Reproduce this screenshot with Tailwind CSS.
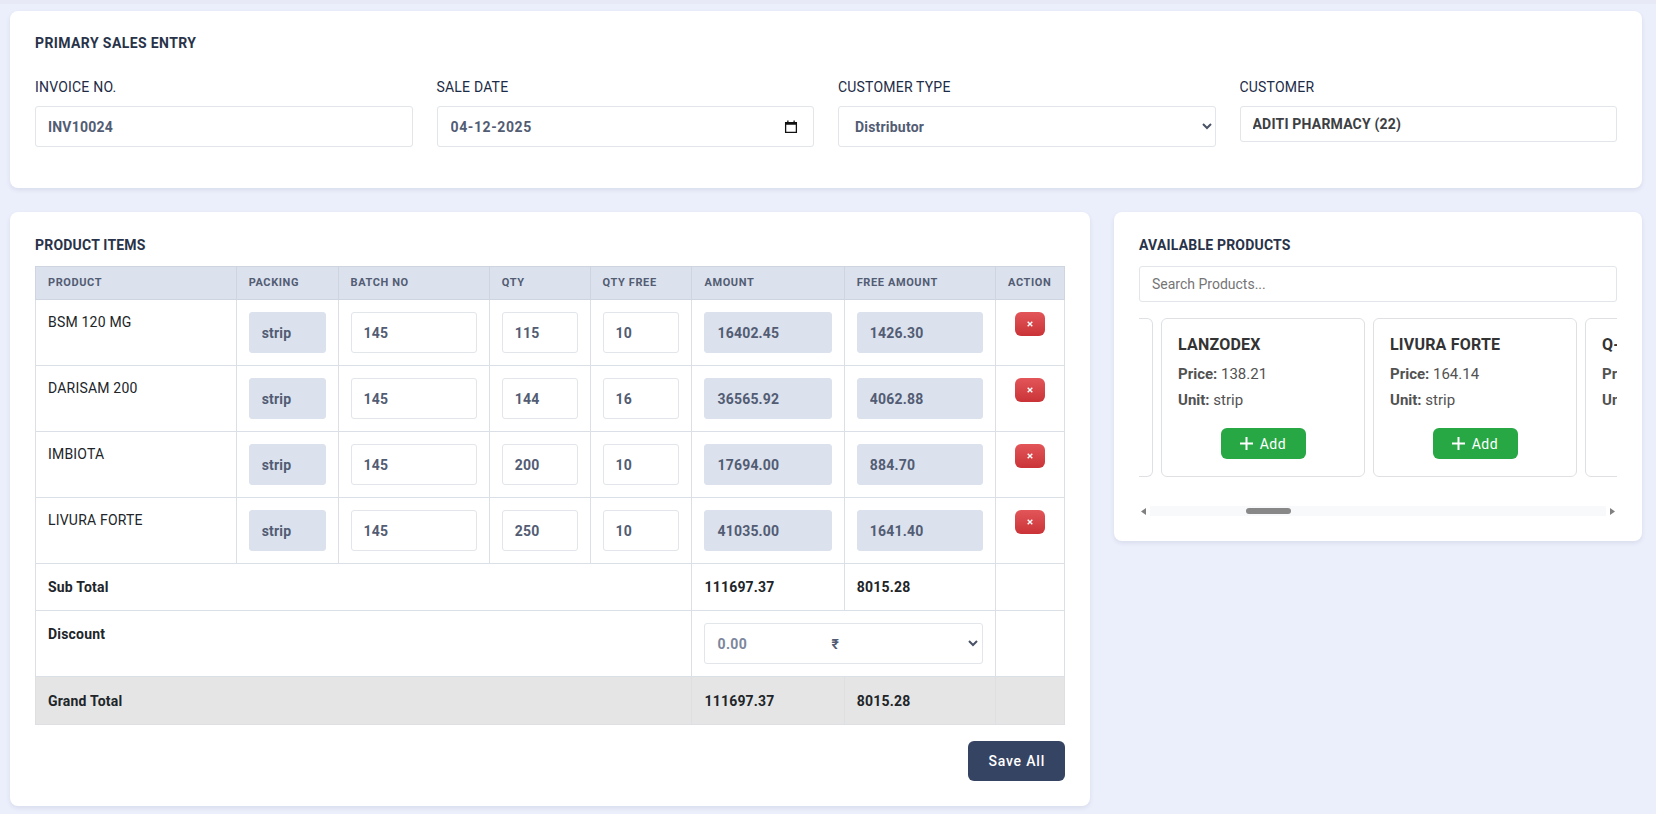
<!DOCTYPE html>
<html lang="en">
  <head>
    <meta charset="UTF-8" />
    <meta name="viewport" content="width=device-width, initial-scale=1.0" />
    <title>Primary Sales Entry</title>
    <script src="https://cdn.jsdelivr.net/npm/@tailwindcss/browser@4"></script>
  </head>
  <body class="min-h-screen bg-[#ebeefb] font-[Roboto,sans-serif] text-sm text-[#212529]">
    <div class="h-1 bg-[#e7eaf6]"></div>
    <main class="pt-[7px] pr-[14px] pb-2 pl-[10px]">
      <!-- Invoice details -->
      <section class="rounded-lg bg-white px-[25px] pt-6 pb-[41px] shadow-[0_2px_4px_rgba(60,75,110,0.1)]">
        <h2 class="mb-[26px] text-sm/4 font-bold tracking-[0.4px] text-[#283349]">PRIMARY SALES ENTRY</h2>
        <div class="grid grid-cols-1 items-start gap-6 md:grid-cols-2 lg:grid-cols-4">
          <div>
            <label for="invoiceNo" class="mb-[9px] block text-sm/5 tracking-[0.2px] text-[#1c2b46]">INVOICE NO.</label>
            <input id="invoiceNo" type="text" value="INV10024" class="h-[41px] w-full rounded-[3px] border border-[#e2e5e9] px-3 font-bold tracking-[0.2px] text-[#525c73]" />
          </div>
          <div>
            <label for="saleDate" class="mb-[9px] block text-sm/5 tracking-[0.2px] text-[#1c2b46]">SALE DATE</label>
            <div class="flex h-[41px] items-center rounded-[3px] border border-[#e2e5e9] pr-[15px] pl-[13px]">
              <input id="saleDate" type="text" value="04-12-2025" class="min-w-0 flex-1 font-bold tracking-[0.6px] text-[#525c73]" />
              <button type="button" aria-label="Open calendar">
                <svg class="size-[14px]" viewBox="0 0 13 13" fill="none">
                  <path d="M1.5 2.5h10v9h-10z" stroke="#111" stroke-width="1.2" />
                  <path d="M1 2h11v2.5H1zM3 0.5h1.2v2H3zM8.8 0.5h1.2v2H8.8z" fill="#111" />
                </svg>
              </button>
            </div>
          </div>
          <div>
            <label for="customerType" class="mb-[9px] block text-sm/5 tracking-[0.2px] text-[#1c2b46]">CUSTOMER TYPE</label>
            <div class="relative">
              <select id="customerType" class="h-[41px] w-full appearance-none rounded-[3px] border border-[#e2e5e9] px-4 font-bold tracking-[0.2px] text-[#525c73]">
                <option>Distributor</option>
              </select>
              <svg class="pointer-events-none absolute top-[17px] right-1 h-[7px] w-[10px]" viewBox="0 0 10 7" fill="none" stroke="#4a5266" stroke-width="2">
                <path d="M1 1l4 4 4-4" />
              </svg>
            </div>
          </div>
          <div>
            <label for="customer" class="mb-[9px] block text-sm/5 tracking-[0.2px] text-[#1c2b46]">CUSTOMER</label>
            <input id="customer" type="text" value="ADITI PHARMACY (22)" class="h-9 w-full rounded-[3px] border border-[#e2e5e9] px-3 font-bold tracking-[0.2px] text-[#3c4043]" />
          </div>
        </div>
      </section>

      <div class="mt-6 grid grid-cols-1 items-start gap-6 lg:grid-cols-12">
        <!-- Product items -->
        <section class="rounded-lg bg-white p-[25px] shadow-[0_2px_4px_rgba(60,75,110,0.1)] lg:col-span-8">
          <h2 class="mb-[13px] text-sm/4 font-bold tracking-[0.2px] text-[#283349]">PRODUCT ITEMS</h2>
          <table class="w-full table-fixed border-collapse text-left">
            <colgroup>
              <col class="w-[19.5%]" />
              <col class="w-[9.9%]" />
              <col class="w-[14.7%]" />
              <col class="w-[9.8%]" />
              <col class="w-[9.9%]" />
              <col class="w-[14.8%]" />
              <col class="w-[14.7%]" />
              <col class="w-[6.7%]" />
            </colgroup>
            <thead class="bg-[#dbe1ed] text-[11px]/5 tracking-[0.6px] text-[#525c73]">
              <tr>
                <th class="border border-[#ced5e1] px-3 py-[6px] font-bold">PRODUCT</th>
                <th class="border border-[#ced5e1] px-3 py-[6px] font-bold">PACKING</th>
                <th class="border border-[#ced5e1] px-3 py-[6px] font-bold">BATCH NO</th>
                <th class="border border-[#ced5e1] px-3 py-[6px] font-bold">QTY</th>
                <th class="border border-[#ced5e1] px-3 py-[6px] font-bold">QTY FREE</th>
                <th class="border border-[#ced5e1] px-3 py-[6px] font-bold">AMOUNT</th>
                <th class="border border-[#ced5e1] px-3 py-[6px] font-bold">FREE AMOUNT</th>
                <th class="border border-[#ced5e1] px-3 py-[6px] font-bold">ACTION</th>
              </tr>
            </thead>
            <tbody id="itemRows"></tbody>
            <tfoot class="text-sm/[22px] font-bold tracking-[0.2px]">
              <tr>
                <td colspan="5" class="border border-[#dbdfe6] p-3">Sub Total</td>
                <td class="border border-[#dbdfe6] p-3">111697.37</td>
                <td class="border border-[#dbdfe6] p-3">8015.28</td>
                <td class="border border-[#dbdfe6] p-3"></td>
              </tr>
              <tr>
                <td colspan="5" class="border border-[#dbdfe6] p-3 align-top">Discount</td>
                <td colspan="2" class="border border-[#dbdfe6] p-3">
                  <div class="relative flex h-[41px] rounded-[3px] border border-[#e2e5e9]">
                    <input type="text" aria-label="Discount" placeholder="0.00" class="w-[110px] pl-3 tracking-[0.4px] placeholder:text-[#7c869c]" />
                    <select aria-label="Discount type" class="min-w-0 flex-1 appearance-none pl-4 text-[#525c73]">
                      <option>₹</option>
                    </select>
                    <svg class="pointer-events-none absolute top-4 right-1 h-[7px] w-[10px]" viewBox="0 0 10 7" fill="none" stroke="#4a5266" stroke-width="2">
                      <path d="M1 1l4 4 4-4" />
                    </svg>
                  </div>
                </td>
                <td class="border border-[#dbdfe6] p-3"></td>
              </tr>
              <tr class="bg-[#e5e5e5]">
                <td colspan="5" class="border border-[#dedfe2] px-3 pt-[13px] pb-3">Grand Total</td>
                <td class="border border-[#dedfe2] px-3 pt-[13px] pb-3">111697.37</td>
                <td class="border border-[#dedfe2] px-3 pt-[13px] pb-3">8015.28</td>
                <td class="border border-[#dedfe2] px-3 pt-[13px] pb-3"></td>
              </tr>
            </tfoot>
          </table>
          <div class="mt-4 flex justify-end">
            <button type="button" class="h-10 rounded-md bg-[#364463] px-5 font-medium tracking-[0.8px] text-white">Save All</button>
          </div>
        </section>

        <!-- Available products -->
        <section class="min-w-0 rounded-lg bg-white p-[25px] shadow-[0_2px_4px_rgba(60,75,110,0.1)] lg:col-span-4">
          <h2 class="mb-[13px] text-sm/4 font-bold tracking-[0.2px] text-[#283349]">AVAILABLE PRODUCTS</h2>
          <input type="search" aria-label="Search products" placeholder="Search Products..." class="mb-4 h-9 w-full rounded-[3px] border border-[#e2e5e9] px-3 placeholder:text-[#757575]" />
          <div id="productList" class="flex gap-2 overflow-x-auto [scrollbar-width:none]"></div>
          <div class="mt-[29px] flex h-[10px] items-center justify-between px-[2px]">
            <svg class="h-[7px] w-[5px]" viewBox="0 0 5 7" fill="#808080"><path d="M5 0v7L0 3.5z" /></svg>
            <div class="mx-1 h-full flex-1 bg-[#f8f9fa] py-[2px]">
              <div class="ml-[21%] h-[6px] w-[45px] rounded-full bg-[#888]"></div>
            </div>
            <svg class="h-[7px] w-[5px]" viewBox="0 0 5 7" fill="#808080"><path d="M0 0v7l5-3.5z" /></svg>
          </div>
        </section>
      </div>
    </main>

    <script>
      const items = [
        { name: "BSM 120 MG", packing: "strip", batch: "145", qty: "115", free: "10", amount: "16402.45", freeAmount: "1426.30" },
        { name: "DARISAM 200", packing: "strip", batch: "145", qty: "144", free: "16", amount: "36565.92", freeAmount: "4062.88" },
        { name: "IMBIOTA", packing: "strip", batch: "145", qty: "200", free: "10", amount: "17694.00", freeAmount: "884.70" },
        { name: "LIVURA FORTE", packing: "strip", batch: "145", qty: "250", free: "10", amount: "41035.00", freeAmount: "1641.40" },
      ];

      const products = [
        { name: "LANZODEX", price: "138.21", unit: "strip" },
        { name: "LIVURA FORTE", price: "164.14", unit: "strip" },
        { name: "Q-", price: "", unit: "strip" },
      ];

      // One table cell with an input; read-only ones are shaded
      function inputCell(label, value, readOnly) {
        const shade = readOnly ? "border-[#dbe1ed] bg-[#dbe1ed]" : "border-[#e2e5e9]";
        return `
          <td class="border border-[#dbdfe6] p-3 align-top">
            <input type="text" aria-label="${label}" value="${value}" ${readOnly ? "readonly" : ""}
              class="block h-[41px] w-full rounded-[3px] border ${shade} px-3 font-bold tracking-[0.2px] text-[#525c73]" />
          </td>`;
      }

      function createItemRow(item) {
        return `
          <tr>
            <td class="border border-[#dbdfe6] p-3 align-top leading-[21px] tracking-[0.2px]">${item.name}</td>
            ${inputCell("Packing", item.packing, true)}
            ${inputCell("Batch no", item.batch, false)}
            ${inputCell("Quantity", item.qty, false)}
            ${inputCell("Free quantity", item.free, false)}
            ${inputCell("Amount", item.amount, true)}
            ${inputCell("Free amount", item.freeAmount, true)}
            <td class="border border-[#dbdfe6] p-3 align-top">
              <button type="button" aria-label="Remove ${item.name}" class="mx-auto flex h-6 w-[30px] items-center justify-center rounded-md bg-linear-to-b from-[#e25559] to-[#ca3337]">
                <svg class="size-[6px]" viewBox="0 0 6 6" stroke="#fff" stroke-width="1.4"><path d="M0.7 0.7l4.6 4.6M5.3 0.7L0.7 5.3" /></svg>
              </button>
            </td>
          </tr>`;
      }

      function createProductCard(product) {
        return `
          <div class="w-[204px] shrink-0 rounded-md border border-[#dee0e3] p-4 text-[#525252]">
            <h3 class="text-base/5 font-bold tracking-[0.2px] text-[#333]">${product.name}</h3>
            <p class="mt-2 text-[15px]/[22px]"><strong>Price:</strong> ${product.price}</p>
            <p class="mt-1 text-[15px]/[22px]"><strong>Unit:</strong> ${product.unit}</p>
            <button type="button" class="mx-auto mt-[17px] mb-px flex h-[31px] w-[85px] items-center justify-center gap-[7px] rounded-md bg-[#28a745] tracking-[0.6px] text-white">
              <svg class="size-[13px]" viewBox="0 0 13 13" stroke="#fff" stroke-width="2"><path d="M6.5 0v13M0 6.5h13" /></svg>
              Add
            </button>
          </div>`;
      }

      document.getElementById("itemRows").innerHTML = items.map(createItemRow).join("");

      // Right edge of the card that is already scrolled past
      const pastCard = `<div class="w-[14px] shrink-0 rounded-r-md border border-l-0 border-[#dee0e3]"></div>`;
      document.getElementById("productList").innerHTML = pastCard + products.map(createProductCard).join("");
    </script>
  </body>
</html>
